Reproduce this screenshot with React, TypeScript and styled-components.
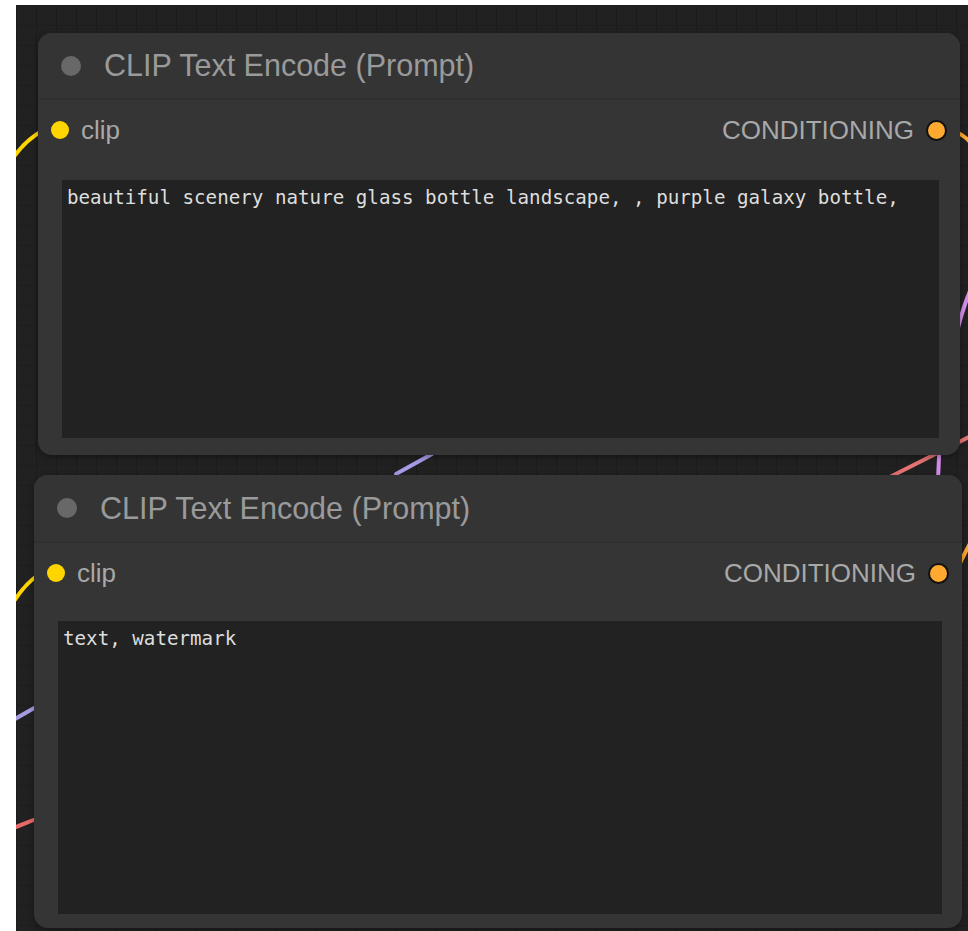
import * as React from "react";
import styled, { createGlobalStyle } from "styled-components";

const GlobalStyle = createGlobalStyle`
    html, body {
        margin: 0;
        background: #fff;
    }
    * {
        box-sizing: border-box;
    }
`;

const Page = styled.div`
    padding: 5px 0 0 16px;
`;

const Canvas = styled.div`
    position: relative;
    width: 952px;
    height: 926px;
    overflow: hidden;
    background-color: #212121;
    background-image:
        linear-gradient(to right, #1b1b1b 1px, transparent 1px),
        linear-gradient(to bottom, #1d1d1d 1px, transparent 1px);
    background-size: 20px 20px;
    font-family: "Liberation Sans", Arial, sans-serif;
`;

const Wires = styled.svg`
    position: absolute;
    left: 0;
    top: 0;
    width: 952px;
    height: 926px;
`;

const NodeBox = styled.div<{ $x: number; $y: number; $w: number; $h: number }>`
    position: absolute;
    left: ${p => p.$x}px;
    top: ${p => p.$y}px;
    width: ${p => p.$w}px;
    height: ${p => p.$h}px;
    display: flex;
    flex-direction: column;
    background: #353535;
    border-radius: 14px;
    box-shadow: 0 2px 6px rgba(0, 0, 0, .35);
    overflow: hidden;
`;

const TitleBar = styled.div<{ $h: number }>`
    height: ${p => p.$h}px;
    flex: none;
    display: flex;
    align-items: center;
    padding-left: 23px;
    gap: 23px;
    background: #343434;
    border-bottom: 2px solid #2f2f2f;
`;

const TitleDot = styled.span`
    width: 20px;
    height: 20px;
    border-radius: 50%;
    background: #686868;
`;

const TitleText = styled.span`
    font-size: 30.5px;
    color: #9a9a9a;
    white-space: nowrap;
`;

const SlotRow = styled.div`
    height: 60px;
    flex: none;
    display: flex;
    align-items: center;
    justify-content: space-between;
    padding: 0 13px 0 13px;
`;

const Slot = styled.div`
    display: flex;
    align-items: center;
    gap: 12px;
    font-size: 26px;
    color: #a8a8a8;
`;

const SlotDot = styled.span<{ $color: string; $ring?: boolean }>`
    width: ${p => (p.$ring ? 21 : 18)}px;
    height: ${p => (p.$ring ? 21 : 18)}px;
    border-radius: 50%;
    background: ${p => p.$color};
    border: ${p => (p.$ring ? "2px solid #111" : "none")};
`;

const Body = styled.div<{ $top: number; $right: number; $bottom: number }>`
    flex: 1;
    display: flex;
    padding: ${p => `${p.$top}px ${p.$right}px ${p.$bottom}px 24px`};
`;

const Prompt = styled.textarea`
    flex: 1;
    resize: none;
    border: none;
    outline: none;
    margin: 0;
    padding: 6px 5px;
    background: #222;
    color: #dedede;
    font-family: "DejaVu Sans Mono", "Liberation Mono", monospace;
    font-size: 19.2px;
    line-height: 1.2;
`;

type NodeProps = {
    x: number;
    y: number;
    w: number;
    h: number;
    titleH: number;
    gapTop: number;
    padRight: number;
    padBottom: number;
    text: string;
};

const ClipTextEncode = (props: NodeProps) => {
    return (
        <NodeBox $x={props.x} $y={props.y} $w={props.w} $h={props.h}>
            <TitleBar $h={props.titleH}>
                <TitleDot />
                <TitleText>CLIP Text Encode (Prompt)</TitleText>
            </TitleBar>
            <SlotRow>
                <Slot>
                    <SlotDot $color="#ffd500" />
                    clip
                </Slot>
                <Slot>
                    CONDITIONING
                    <SlotDot $color="#ffa931" $ring />
                </Slot>
            </SlotRow>
            <Body $top={props.gapTop} $right={props.padRight} $bottom={props.padBottom}>
                <Prompt readOnly spellCheck={false} defaultValue={props.text} />
            </Body>
        </NodeBox>
    );
};

const App = () => {
    return (
        <Page>
            <GlobalStyle />
            <Canvas>
                {/* links between nodes, drawn in page coordinates */}
                <Wires viewBox="16 5 952 926" fill="none" strokeLinecap="round">
                    <path d="M 8 166 Q 22 142 42 131" stroke="#ffd500" strokeWidth="4" />
                    <path d="M 8 612 Q 20 588 38 575" stroke="#ffd500" strokeWidth="4" />
                    <path d="M 6 724 L 36 707" stroke="#a99ae6" strokeWidth="4" />
                    <path d="M 6 831 L 36 819" stroke="#e86a6a" strokeWidth="4" />
                    <path d="M 956 132 Q 964 135 972 144" stroke="#ffa931" strokeWidth="4" />
                    <path d="M 975 280 C 955 320, 940 400, 938 480" stroke="#d48ce8" strokeWidth="4" />
                    <path d="M 880 482 L 975 434" stroke="#e57373" strokeWidth="4" />
                    <path d="M 396 474 L 432 454" stroke="#a99ae6" strokeWidth="4" />
                    <path d="M 958 568 Q 963 556 972 540" stroke="#ffa931" strokeWidth="4" />
                </Wires>
                <ClipTextEncode
                    x={22}
                    y={28}
                    w={922}
                    h={422}
                    titleH={67}
                    gapTop={20}
                    padRight={21}
                    padBottom={17}
                    text="beautiful scenery nature glass bottle landscape, , purple galaxy bottle,"
                />
                <ClipTextEncode
                    x={18}
                    y={470}
                    w={928}
                    h={453}
                    titleH={68}
                    gapTop={18}
                    padRight={20}
                    padBottom={14}
                    text="text, watermark"
                />
            </Canvas>
        </Page>
    );
};

export default App;
